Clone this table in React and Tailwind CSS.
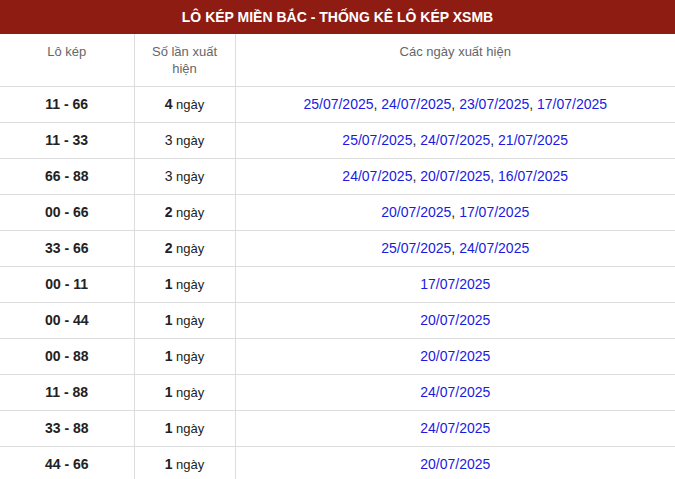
import React from "react";

const rows = [
  ["11 - 66", "4", ["25/07/2025", "24/07/2025", "23/07/2025", "17/07/2025"]],
  ["11 - 33", "3", ["25/07/2025", "24/07/2025", "21/07/2025"], false],
  ["66 - 88", "3", ["24/07/2025", "20/07/2025", "16/07/2025"], false],
  ["00 - 66", "2", ["20/07/2025", "17/07/2025"]],
  ["33 - 66", "2", ["25/07/2025", "24/07/2025"]],
  ["00 - 11", "1", ["17/07/2025"]],
  ["00 - 44", "1", ["20/07/2025"]],
  ["00 - 88", "1", ["20/07/2025"]],
  ["11 - 88", "1", ["24/07/2025"]],
  ["33 - 88", "1", ["24/07/2025"]],
  ["44 - 66", "1", ["20/07/2025"]],
];

export default function App() {
  return (
    <div className="w-[675px] bg-white font-['Liberation_Sans',Arial,sans-serif] text-[#222]">
      <div className="h-[34px] bg-[#8f1c13] flex items-center justify-center text-white font-bold text-[14px]">
        LÔ KÉP MIỀN BẮC - THỐNG KÊ LÔ KÉP XSMB
      </div>
      <table className="w-full border-collapse">
        <thead>
          <tr className="h-[52px] border-b border-[#dddddd] align-top">
            <th className="w-[134px] border-r border-[#dddddd] font-normal text-[13px] text-[#666] leading-[17px] pt-[9px] px-2">Lô kép</th>
            <th className="w-[101px] border-r border-[#dddddd] font-normal text-[13px] text-[#666] leading-[17px] pt-[9px] px-3">Số lần xuất hiện</th>
            <th className="font-normal text-[13px] text-[#666] leading-[17px] pt-[9px] px-2">Các ngày xuất hiện</th>
          </tr>
        </thead>
        <tbody>
          {rows.map(([pair, n, dates, boldN], i) => (
            <tr key={i} className="h-[36px] border-b border-[#dddddd]">
              <td className="border-r border-[#dddddd] text-center font-bold text-[14px] p-0">{pair}</td>
              <td className="border-r border-[#dddddd] text-center text-[13px] p-0">
                <span className={boldN === false ? "text-[14px]" : "font-bold text-[14px]"}>{n}</span> ngày
              </td>
              <td className="text-center text-[14px] p-0">
                {dates.map((d, j) => (
                  <React.Fragment key={j}>
                    <span className="text-[#1a1ae0]">{d}</span>
                    {j < dates.length - 1 ? ", " : ""}
                  </React.Fragment>
                ))}
              </td>
            </tr>
          ))}
        </tbody>
      </table>
    </div>
  );
}
